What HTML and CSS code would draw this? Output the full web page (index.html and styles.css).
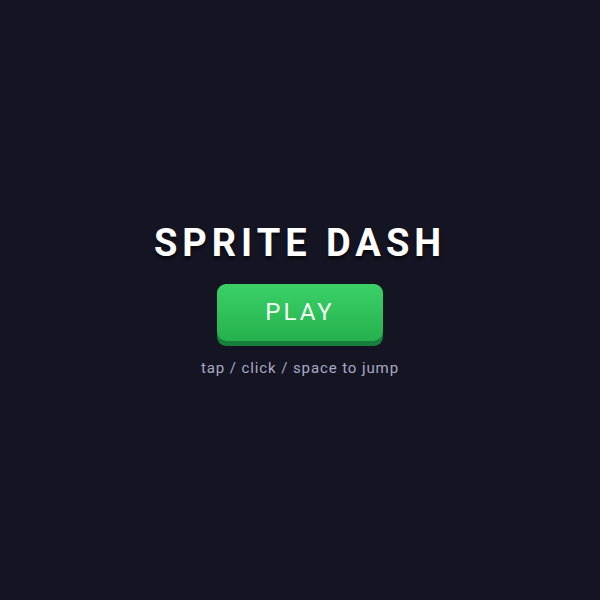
FILE: index.html
```html
<!DOCTYPE html>
<html lang="en">
<head>
<meta charset="utf-8">
<title>Sprite Dash</title>
<link rel="stylesheet" href="styles.css">
</head>
<body>
  <main class="menu">
    <h1 class="title">SPRITE DASH</h1>
    <button class="play-btn" type="button">PLAY</button>
    <p class="hint">tap / click / space to jump</p>
  </main>
</body>
</html>
```
FILE: styles.css
```css
html, body {
  margin: 0;
  height: 100%;
}

body {
  background: #141423;
  font-family: Roboto, "Noto Sans", sans-serif;
}

.menu {
  height: 100%;
  display: flex;
  flex-direction: column;
  align-items: center;
  justify-content: center;
}

.title {
  margin: 0;
  font-size: 38px;
  font-weight: 700;
  letter-spacing: 5px;
  color: #ffffff;
  text-shadow: 0 3px 3px rgba(0, 0, 0, 0.55);
  line-height: 1;
}

.play-btn {
  margin-top: 22px;
  width: 166px;
  height: 57px;
  border: 0;
  border-radius: 9px;
  background: linear-gradient(#3bd168, #25b14d);
  box-shadow: 0 5px 0 #17803a;
  color: #f2fcf4;
  font-family: inherit;
  font-size: 24px;
  letter-spacing: 3px;
  padding: 0;
  cursor: pointer;
}

.hint {
  margin: 18px 0 0;
  font-size: 15px;
  letter-spacing: 0.9px;
  color: #a9a9c4;
}
```
